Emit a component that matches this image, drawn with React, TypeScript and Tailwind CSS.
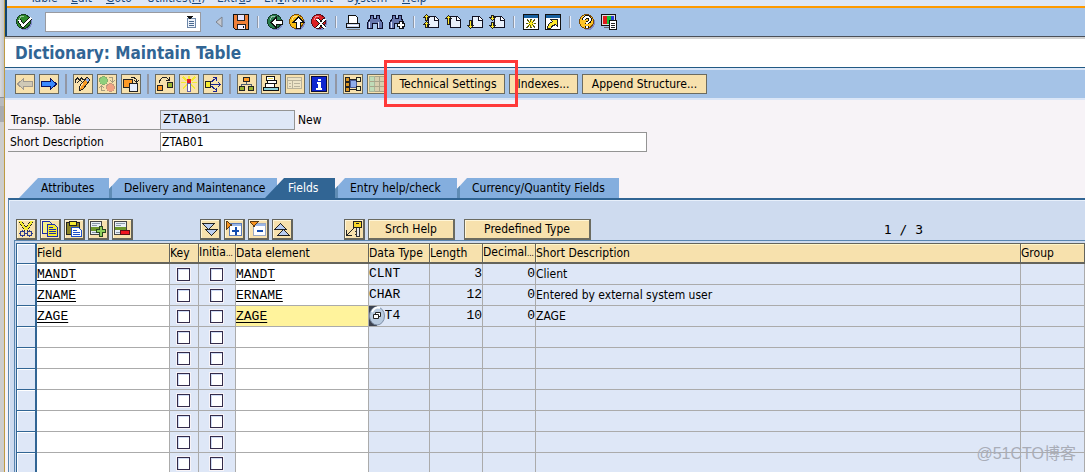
import { useState } from 'react';
import type { ReactNode } from 'react';

type IconName =
  | 'ok' | 'save' | 'back' | 'exit' | 'cancel' | 'print' | 'find' | 'findNext'
  | 'pageFirst' | 'pageUp' | 'pageDown' | 'pageLast' | 'session' | 'shortcut' | 'help' | 'layout'
  | 'left' | 'right' | 'display' | 'active' | 'other' | 'check' | 'activate' | 'whereUsed'
  | 'hierarchy' | 'stack' | 'list' | 'info' | 'graph' | 'grid'
  | 'cut' | 'copy' | 'paste' | 'insert' | 'delete' | 'expand' | 'insertNode' | 'collapseNode' | 'collapse' | 'key';

const page = (
  <>
    <path d="M5.500 2.500h7l3 3v8h-10z" fill="#e9f0fb" stroke="#111122" />
    <path d="M11.500 2.500v4h4" fill="#fff" stroke="#111122" />
  </>
);
const ball = (color: string, dark: string) => (
  <>
    <circle cx="9" cy="9" r="7" fill="#7f87c8" />
    <circle cx="7.5" cy="7.5" r="7" fill={color} stroke={dark} />
    <path d="M3 6a5 5 0 0 1 5-4" fill="none" stroke="#fff" opacity=".5" />
  </>
);

// All glyphs are drawn on a 16 x 16 grid
const icons: Record<IconName, ReactNode> = {
  ok: <>{ball('#2f8a2c', '#173f24')}<path d="M3 6l4 6 8-8" fill="none" stroke="#111" strokeWidth="4" /><path d="M3 6l4 6 8-8" fill="none" stroke="#fff" strokeWidth="2" /></>,
  save: <><path d="M.5.5h15v15h-13l-2-2z" fill="#f08038" stroke="#111" /><path d="M4.500.5h7v6h-7z" fill="#e6e4fb" stroke="#222" /><path d="M4.500 10.500h8v5h-8z" fill="#f3f0ff" stroke="#222" /><path d="M10 12h1v2h-1z" fill="#111" /></>,
  back: <>{ball('#2a7f4e', '#123a28')}<path d="M4 8.500l5-5v3h6.500v4H9v3z" fill="#fff" stroke="#111" /></>,
  exit: <>{ball('#f9bd14', '#7a4a08')}<path d="M9.500 3l5 5h-3v6.500h-4V8h-3z" fill="#fff" stroke="#111" /></>,
  cancel: <>{ball('#dc1f24', '#58101a')}<path d="M6 5l8 9M14 5l-8 9" stroke="#111" strokeWidth="3.500" /><path d="M6 5l8 9M14 5l-8 9" stroke="#fff" strokeWidth="1.800" /></>,
  print: <><path d="M3.500 1.500h7l2 2v6h-9z" fill="#fff" stroke="#111" /><path d="M1.500 9.500h13v4h-13z" fill="#c9d6ef" stroke="#111" /><path d="M3 11.500h10" stroke="#fff" /><path d="M2 15h13" stroke="#777" /></>,
  find: <><path d="M3.500 1.500h3v3h3v-3h3v3l3 4v6h-5v-5h-5v5h-5v-6l3-4z" fill="#6777ad" stroke="#0c0c28" /><path d="M2.500 8v6M11.500 8v6" stroke="#dce4fa" /></>,
  findNext: <><path d="M3.500 1.500h3v3h3v-3h3v3l2 4v6h-4v-5h-5v5h-5v-6l3-4z" fill="#6777ad" stroke="#0c0c28" /><path d="M2.500 8v6" stroke="#dce4fa" /><path d="M12 7v8M8 11h8" stroke="#111" strokeWidth="4" /><path d="M12 8v6M9 11h6" stroke="#fff" strokeWidth="2" /></>,
  pageFirst: <>{page}<path d="M3.500.5l3 3h-2v3h-2v-3h-2zM3.500 7.500l3 3h-2v3h-2v-3h-2z" fill="#ffe928" stroke="#222" /></>,
  pageUp: <>{page}<path d="M3.500 1.500l3 3h-2v6h-2v-6h-2z" fill="#ffe928" stroke="#222" /></>,
  pageDown: <>{page}<path d="M2.500 6.500h2v5h2l-3 3-3-3h2z" fill="#ffe928" stroke="#222" /></>,
  pageLast: <>{page}<path d="M2.500 1.500h2v2h2l-3 3-3-3h2zM2.500 8.500h2v3h2l-3 3-3-3h2z" fill="#ffe928" stroke="#222" /></>,
  session: <><path d="M.5.5h15v15H.5z" fill="#fff" stroke="#111" /><path d="M1 1h14v3H1z" fill="#17609f" /><path d="M8 5v9M3 9.500h10M4 5l8 9M12 5l-8 9" stroke="#5a5a10" strokeWidth="1.400" /><path d="M8 6v7M5 9.500h6M6 7l4 5M10 7l-4 5" stroke="#ffee20" /></>,
  shortcut: <><path d="M.5.5h15v15H.5z" fill="#fff" stroke="#111" /><path d="M1 1h14v3H1z" fill="#17609f" /><path d="M5.500 5.500h7v7l-2-2c-3 1-4 2-5 4h-3c0-4 2-5 5-7z" fill="#ffe928" stroke="#222" /></>,
  help: <>{ball('#ffc426', '#7a4a08')}<path d="M5 6c0-4 6-4 6 0 0 2-3 2-3 4M8 12v2" fill="none" stroke="#111" strokeWidth="3.600" /><path d="M5 6c0-4 6-4 6 0 0 2-3 2-3 4M8 12v2" fill="none" stroke="#fff" strokeWidth="2" /></>,
  layout: <><path d="M.5.5h14v11H.5z" fill="#ddd" stroke="#111" /><path d="M3 13.500h6" stroke="#666" /><path d="M2 2h4v8H2z" fill="#e01b1b" /><path d="M6 2h4v8H6z" fill="#18c331" /><path d="M10 2h3v8h-3z" fill="#263bd8" /><path d="M8.500 6.500h7v9h-7z" fill="#fff" stroke="#111" /><path d="M10 9.500h4M10 11.500h4M10 13.500h4" stroke="#222" /></>,
  left: <path d="M.5 8l6-5.500v3h9v5h-9v3z" fill="#cfc9b6" stroke="#a09a90" />,
  right: <path d="M15.500 8l-6-5.500v3h-9v5h9v3z" fill="#3a8aff" stroke="#0a1160" />,
  display: <><path d="M.5 7V4l2-2 2 2 2-2 2 2M2 7l3-3 3 3" fill="none" stroke="#222" /><path d="M12 1l3 3-7 9-4 2v-4z" fill="#f79a25" stroke="#222" /><path d="M12 2l2 2-2 2-2-2z" fill="#8fb0f0" /><path d="M8 7l-3 5" stroke="#ffe0a8" /></>,
  active: <><circle cx="4.500" cy="4.500" r="4" fill="#8fd07c" stroke="#86ae70" /><circle cx="11.500" cy="11.500" r="4" fill="#f1a283" stroke="#c49a80" /><path d="M10 1.500h3.500V6M11 4l2.500 2.500L16 4M6 14.500H2.500V10M0 12l2.500-2.500L5 12" fill="none" stroke="#a69d80" /></>,
  other: <><path d="M.5 3.500h9v8h-9z" fill="#ff9a24" stroke="#222" /><path d="M6.500 7.500h8v8h-8z" fill="#e5edfb" stroke="#222" /><path d="M8 1.500h3l2.500 2V6M11 4l2.500 2.500L16 4" fill="none" stroke="#222" /></>,
  check: <><path d="M.5 9.500h5v5h-5z" fill="#ff9a24" stroke="#222" /><path d="M10.500 6.500h5v5h-5z" fill="#98b431" stroke="#222" /><path d="M2.500 7V5l3-3.500h4l3 3M9 4.500h3.500V1" fill="none" stroke="#222" /></>,
  activate: <><path d="M2 1l4 4M14 1l-4 4M0 6.500h5M11 6.500h5M2 12l4-3M14 12l-4-3M8 0v3" stroke="#f4ea31" strokeWidth="1.500" /><path d="M6.500 7.500h3v8h-3z" fill="#fff" stroke="#6563a8" /><path d="M6 3h4v4H6z" fill="#e31f25" /></>,
  whereUsed: <><path d="M6 8.500h9M5 7l6-5M5 9l6 5M13 6l2.500 2.500L13 11M8 1.500h3.500V5M8 15.500h3.500V12" fill="none" stroke="#1a2390" /><path d="M.5 5.500h5v6h-5z" fill="#f4ea31" stroke="#222" /></>,
  hierarchy: <><path d="M7.500 5v3M2.500 10V8.500h10V10" fill="none" stroke="#52606f" /><path d="M4.500 1.500h6v4h-6z" fill="#ff9a24" stroke="#222" /><path d="M.5 10.500h5v4h-5zM9.500 10.500h5v4h-5z" fill="#98b431" stroke="#222" /></>,
  stack: <><path d="M3.500.5h8v4h-8zM4.500 4.500h9v3h-9zM2.500 7.500h9v4h-9z" fill="#fff" stroke="#111" /><path d="M.5 11.500h15v3H.5z" fill="#8dd3dc" stroke="#111" /><path d="M5 2.500h5" stroke="#e8de55" /></>,
  list: <><path d="M.5 1.500h14v11H.5z" fill="#ede4c7" stroke="#b9b29a" /><path d="M1 4.500h14M5.500 4v9M2 7.500h2M7 7.500h6M2 10.500h2M7 10.500h6" stroke="#b9b29a" /></>,
  info: <><path d="M.5.5h15v15H.5z" fill="#1027cf" stroke="#0a0d38" /><path d="M7 3h3v2H7zM6 6h4v6h1v2H5v-2h2V8H6z" fill="#fff" /></>,
  graph: <><path d="M4 3.500h8M4 8.500h8M4 13.500h8" stroke="#222" /><path d="M5.500 4.500h6v7h-6z" fill="#8fadea" stroke="#4b5c96" /><path d="M.5 1.500h4v4h-4zM.5 6.500h4v4h-4zM.5 11.500h4v4h-4z" fill="#d89422" stroke="#222" /><path d="M11.500 1.500h4v4h-4zM11.500 10.500h4v4h-4z" fill="#eef0c0" stroke="#222" /></>,
  grid: <><path d="M.5.5h15v15H.5z" fill="#d7ceae" stroke="#a9a58a" /><path d="M.5.5h5v15h-5z" fill="#bfdcb8" stroke="#a9b79a" /><path d="M1 5.500h14M1 10.500h14M10.500 1v14" stroke="#a9a58a" /></>,
  cut: <><path d="M2 0l6 9M14 0L8 9" stroke="#222" strokeWidth="3.500" /><path d="M2 0l6 9M14 0L8 9" stroke="#f4ea31" strokeWidth="2" /><circle cx="4.500" cy="12.500" r="2.300" fill="none" stroke="#2d3c8e" strokeWidth="1.500" /><circle cx="11.500" cy="12.500" r="2.300" fill="none" stroke="#2d3c8e" strokeWidth="1.500" /></>,
  copy: <><path d="M.5.5h7l3 3v9H.5z" fill="#f7f18a" stroke="#1c2ca8" /><path d="M5.500 3.500h7l3 3v9h-10z" fill="#f4ea31" stroke="#1c2ca8" /><path d="M7 6.500h4M7 8.500h7M7 10.500h7M7 12.500h7" stroke="#1c2ca8" /></>,
  paste: <><path d="M.5 1.500h13v12H.5z" fill="#8b8425" stroke="#222" /><path d="M3.500.5h7v4h-7z" fill="#f4ea31" stroke="#222" /><path d="M5.500 6.500h7l3 3v6h-10z" fill="#fff" stroke="#1c50c8" /><path d="M7 9.500h4M7 11.500h7M7 13.500h7" stroke="#1c50c8" /></>,
  insert: <><path d="M.5.5h11v13H.5z" fill="#e8eef5" stroke="#444" /><path d="M2 2.500h8M2 4.500h5M2 11.500h5" stroke="#8998a8" /><path d="M1 6h10v4H1z" fill="#6d982d" /><path d="M11 5v11M6 10h10" stroke="#294720" strokeWidth="4" /><path d="M11 6v9M7 10h8" stroke="#8fd05b" strokeWidth="2" /></>,
  delete: <><path d="M.5.5h12v13H.5z" fill="#e8eef5" stroke="#444" /><path d="M2 2.500h9M2 4.500h5M2 11.500h5" stroke="#8998a8" /><path d="M1 6h11v3H1z" fill="#6d982d" /><path d="M6.500 9.500h9v4h-9z" fill="#f01420" stroke="#5b1016" /></>,
  expand: <><path d="M.5 2.500h12l-6 6z" fill="#b9cdf1" stroke="#222" /><path d="M3.500 8.500h12l-6 6z" fill="#b9cdf1" stroke="#222" /></>,
  insertNode: <><path d="M3.500 2.500h12v12h-12z" fill="#fff" stroke="#5b7bb8" /><path d="M4 4h11" stroke="#9ab7e8" strokeWidth="2" /><path d="M6 10h7M9.500 6v8" stroke="#124cae" strokeWidth="2" /><path d="M.5 0v8l5-4z" fill="#f7931e" stroke="#5d3a10" /></>,
  collapseNode: <><path d="M3.500 2.500h12v12h-12z" fill="#fff" stroke="#9aaac5" /><path d="M4 4h11" stroke="#9ab7e8" strokeWidth="2" /><path d="M7 10h6" stroke="#124cae" strokeWidth="2" /><path d="M0 .5h8l-4 5z" fill="#f7931e" stroke="#5d3a10" /></>,
  collapse: <><path d="M.5 8.500h12l-6-6z" fill="#b9cdf1" stroke="#222" /><path d="M3.500 14.500h12l-6-6z" fill="#b9cdf1" stroke="#222" /></>,
  key: <><path d="M8 7l-7 7M.5 9v5.500H6" fill="none" stroke="#222" /><path d="M10.500 6.500h3v9h-3zM9 10.500h2M9 13.500h2" fill="#e8e8e8" stroke="#333" /><path d="M7.500.5h8v6h-8z" fill="#f7d62a" stroke="#222" /><path d="M10 2.500h3" stroke="#222" /></>,
};

function Icon({ name }: { name: IconName }) {
  return (
    <svg viewBox="0 0 16 16" shapeRendering="crispEdges" className="w-4 h-4 shrink-0 block" aria-hidden="true">
      {icons[name]}
    </svg>
  );
}

function FlatButton({ name }: { name: IconName }) {
  return (
    <button type="button" aria-label={name} className="w-4 h-4 shrink-0">
      <Icon name={name} />
    </button>
  );
}

function ToolButton({ name }: { name: IconName }) {
  return (
    <button type="button" aria-label={name} className="w-5 h-5 shrink-0 flex items-center justify-center bg-[#f7e1ad] border border-[#6b6b60]">
      <Icon name={name} />
    </button>
  );
}

function GridButton({ name }: { name: IconName }) {
  return (
    <button type="button" aria-label={name} className="w-[21px] h-[21px] shrink-0 flex items-center pl-px bg-[#f7e1ad] border border-r-2 border-b-2 border-[#64645c] shadow-[inset_1px_1px_0_#fff6d8]">
      <Icon name={name} />
    </button>
  );
}

const ThinLine = () => <span className="w-px h-3 shrink-0 ml-[2px] mr-[3px] bg-[#8f98a8] shadow-[1px_0_0_#e8eefb]" />;
const ThickLine = () => <span className="w-[2px] h-5 shrink-0 mx-[2px] bg-[#9297a4]" />;

const menu = [
  { before: '', key: '', after: 'Table', width: 'w-[41px]' },
  { before: '', key: 'E', after: 'dit', width: 'w-[35px]' },
  { before: '', key: 'G', after: 'oto', width: 'w-[41px]' },
  { before: 'Utilities(', key: 'M', after: ')', width: 'w-[70px]' },
  { before: 'Extr', key: 'a', after: 's', width: 'w-[47px]' },
  { before: 'En', key: 'v', after: 'ironment', width: 'w-[83px]' },
  { before: 'S', key: 'y', after: 'stem', width: 'w-[55px]' },
  { before: '', key: 'H', after: 'elp', width: 'w-[40px]' },
];

const tabs = [
  { label: 'Attributes', style: 'w-[90px] pl-[22px] [clip-path:polygon(19px_0,100%_0,100%_100%,0_100%)]' },
  { label: 'Delivery and Maintenance', style: 'w-[168px] pl-3 border-l-[3px] [clip-path:polygon(10px_0,100%_0,100%_100%,0_100%,0_11px)]' },
  { label: 'Fields', style: 'w-[70px] pl-[23px] -ml-3 [clip-path:polygon(19px_0,100%_0,100%_100%,0_100%)]' },
  { label: 'Entry help/check', style: 'w-[122px] pl-3 border-l-[3px] [clip-path:polygon(10px_0,100%_0,100%_100%,0_100%,0_11px)]' },
  { label: 'Currency/Quantity Fields', style: 'w-[162px] pl-3 border-l-[3px] [clip-path:polygon(10px_0,100%_0,100%_100%,0_100%,0_11px)]' },
];

const columns = [
  { name: 'Field' },
  { name: 'Key' },
  { name: 'Initia', cut: true },
  { name: 'Data element' },
  { name: 'Data Type' },
  { name: 'Length' },
  { name: 'Decimal', cut: true },
  { name: 'Short Description' },
  { name: 'Group' },
];

interface Row {
  field: string;
  element: string;
  type: string;
  length: string;
  decimals: string;
  text: string;
}

const blank: Row = { field: '', element: '', type: '', length: '', decimals: '', text: '' };
const rows: Row[] = [
  { field: 'MANDT', element: 'MANDT', type: 'CLNT', length: '3', decimals: '0', text: 'Client' },
  { field: 'ZNAME', element: 'ERNAME', type: 'CHAR', length: '12', decimals: '0', text: 'Entered by external system user' },
  { field: 'ZAGE', element: 'ZAGE', type: 'INT4', length: '10', decimals: '0', text: 'ZAGE' },
  ...Array.from({ length: 7 }, () => blank),
];

const mono = "font-['Liberation_Mono',monospace] text-[13px]";
const cell = 'p-0 h-[21px] border-r border-b border-[#ababab] overflow-hidden whitespace-nowrap';
const box = 'appearance-none block w-[13px] h-[13px] bg-white border border-[#332b4a] shadow-[0_0_0_1px_#f7f3f7,inset_1px_1px_0_#cfdcf5] checked:bg-[#332b4a]';
const textButton = 'shrink-0 bg-[#f7e1ad] border-[#6b6b60] text-center';

export default function App() {
  const [activeTab, setActiveTab] = useState('Fields');

  return (
    <div className="h-screen flex overflow-hidden bg-[#f7f3f7] font-['DejaVu_Sans_Condensed','DejaVu_Sans',sans-serif] text-[12px] leading-4 text-black">
      {/* Edge of the window behind */}
      <div className="w-[5px] shrink-0 flex flex-col bg-[#cdcdcd] border-r border-[#bd9a42]">
        <div className="h-[98px] bg-linear-to-r from-[#d8dadd] to-[#c2c4c8] border-b border-[#8b8f96]" />
        <div className="h-2 bg-[#b8babd]" />
        <div className="h-4 bg-[#a9abae]" />
      </div>

      <div className="flex-1 min-w-0 flex flex-col relative">
        <header className="shrink-0 border-l-2 border-[#10426b]">
          <nav className="h-[6px] flex items-end overflow-hidden bg-[#dee7f7] pl-[23px] text-[#17477b]">
            {menu.map((item) => (
              <a key={item.before + item.key + item.after} href="#" className={`${item.width} shrink-0 whitespace-nowrap`}>
                {item.before}<span className="underline">{item.key}</span>{item.after}
              </a>
            ))}
          </nav>
          <div className="h-[30px] flex items-center gap-[6px] bg-[#a5c3e7] border-t-2 border-[#ff9a00] pl-[9px]">
            <FlatButton name="ok" />
            <div className="w-[156px] h-5 shrink-0 ml-[7px] flex items-center bg-white border border-[#999aa0] pr-1">
              <input aria-label="Command" className="min-w-0 flex-1 h-full outline-none px-1" />
              <svg viewBox="0 0 10 12" shapeRendering="crispEdges" className="w-[10px] h-3" aria-hidden="true">
                <path d="M1.500 2.500h8v9h-8z" fill="#eef3fb" stroke="#6d87a8" />
                <path d="M3 5.500h5M3 7.500h5M3 9.500h5" stroke="#4a6a90" />
                <path d="M0 0h7L4 4z" fill="#111" />
              </svg>
            </div>
            <button type="button" aria-label="Hide command field" className="w-2 ml-2 mr-1">
              <svg viewBox="0 0 8 12" className="w-2 h-3 block"><path d="M7 1v10L1 6z" fill="#c4c8d0" stroke="#7b828e" /></svg>
            </button>
            <FlatButton name="save" />
            <ThinLine />
            <FlatButton name="back" />
            <FlatButton name="exit" />
            <FlatButton name="cancel" />
            <ThinLine />
            <FlatButton name="print" />
            <FlatButton name="find" />
            <FlatButton name="findNext" />
            <ThinLine />
            <FlatButton name="pageFirst" />
            <FlatButton name="pageUp" />
            <FlatButton name="pageDown" />
            <FlatButton name="pageLast" />
            <ThinLine />
            <FlatButton name="session" />
            <FlatButton name="shortcut" />
            <ThinLine />
            <FlatButton name="help" />
            <FlatButton name="layout" />
          </div>
        </header>

        <div className="h-8 shrink-0 flex items-center bg-white border-t border-[#4a4f58] border-b border-b-[#215984] shadow-[inset_0_2px_0_#d2d2d2] pt-[2px] pl-[10px]">
          <h1 className="text-[17px] font-bold text-[#316594]">Dictionary: Maintain Table</h1>
        </div>

        {/* Application toolbar */}
        <div className="h-8 shrink-0 flex items-center gap-1 bg-[#a5c3e7] border-y-2 border-[#dbe6f7] pl-[10px]">
          <ToolButton name="left" />
          <ToolButton name="right" />
          <ThickLine />
          <ToolButton name="display" />
          <ToolButton name="active" />
          <ToolButton name="other" />
          <ThickLine />
          <ToolButton name="check" />
          <ToolButton name="activate" />
          <ToolButton name="whereUsed" />
          <ThickLine />
          <ToolButton name="hierarchy" />
          <ToolButton name="stack" />
          <ToolButton name="list" />
          <ToolButton name="info" />
          <ThickLine />
          <ToolButton name="graph" />
          <ToolButton name="grid" />
          <div className="relative z-10 shrink-0">
            <button type="button" className={`${textButton} block w-[114px] h-5 border`}>Technical Settings</button>
            <span className="absolute -left-[7px] -right-[13px] -top-[14px] -bottom-[13px] border-[3px] border-[#ff3939] pointer-events-none" />
          </div>
          <button type="button" className={`${textButton} w-[69px] h-5 border`}>Indexes...</button>
          <button type="button" className={`${textButton} w-[125px] h-5 border`}>Append Structure...</button>
        </div>

        <form className="shrink-0 flex flex-col gap-[2px] pt-[10px] pl-[3px]">
          <div className="flex h-5">
            <label htmlFor="table-name" className="w-[152px] pl-[3px] pt-[2px] border-b border-[#949494]">Transp. Table</label>
            <input id="table-name" readOnly defaultValue="ZTAB01" className={`${mono} w-[135px] px-[2px] bg-[#dee7f7] border border-[#949494] outline-none`} />
            <span className="pl-[3px] pt-[2px]">New</span>
          </div>
          <div className="flex h-5">
            <label htmlFor="description" className="w-[152px] pl-[2px] pt-[2px] border-b border-[#949494]">Short Description</label>
            <input id="description" defaultValue="ZTAB01" className="w-[487px] px-px bg-white border border-[#949494] outline-none" />
          </div>
        </form>

        <div role="tablist" className="shrink-0 flex mt-[26px] pl-[14px]">
          {tabs.map((tab) => (
            <button
              key={tab.label}
              type="button"
              role="tab"
              aria-selected={tab.label === activeTab}
              onClick={() => setActiveTab(tab.label)}
              className={`${tab.style} h-5 shrink-0 text-left whitespace-nowrap border-[#5f8cb5] ${tab.label === activeTab ? 'bg-[#316594] text-white' : 'bg-[#84aede]'}`}
            >
              {tab.label}
            </button>
          ))}
        </div>

        <section className="flex-1 ml-[3px] bg-[#cedbef] border-t-2 border-l border-t-[#316594] border-l-[#5a86b0] shadow-[inset_1px_1px_0_#e8f0fb]">
          <div className="flex items-center gap-[3px] pt-[19px] pl-[7px]">
            <GridButton name="cut" />
            <GridButton name="copy" />
            <GridButton name="paste" />
            <GridButton name="insert" />
            <GridButton name="delete" />
            <span className="w-[61px] shrink-0" />
            <GridButton name="expand" />
            <GridButton name="insertNode" />
            <GridButton name="collapseNode" />
            <GridButton name="collapse" />
            <span className="w-[45px] shrink-0" />
            <GridButton name="key" />
            <button type="button" className={`${textButton} w-[87px] h-[21px] border border-r-2 border-b-2 shadow-[inset_1px_1px_0_#fff6d8]`}>Srch Help</button>
            <button type="button" className={`${textButton} w-[127px] h-[21px] ml-[6px] border border-r-2 border-b-2 shadow-[inset_1px_1px_0_#fff6d8]`}>Predefined Type</button>
            <span className="ml-auto mr-[162px] font-['DejaVu_Sans_Mono',monospace] text-[13px] whitespace-nowrap">1 / 3</span>
          </div>

          <div className="ml-[5px] pt-[2px] pl-px border-t border-l border-[#5a86b0]">
            <table className="w-full table-fixed border-separate border-spacing-0">
              <colgroup>
                <col className="w-[21px]" />
                <col className="w-[133px]" />
                <col className="w-[29px]" />
                <col className="w-[37px]" />
                <col className="w-[133px]" />
                <col className="w-[61px]" />
                <col className="w-[53px]" />
                <col className="w-[53px]" />
                <col className="w-[485px]" />
                <col />
              </colgroup>
              <thead>
                <tr>
                  <td className="p-0 h-[21px] bg-[#dee7f7] border border-r-2 border-[#316594] shadow-[inset_1px_1px_0_#fff]" />
                  {columns.map(({ name, cut }) => (
                    <th key={name} scope="col" className="p-0 h-[21px] bg-[#f7e1ad] text-left font-normal whitespace-nowrap overflow-hidden border-t border-r border-b-2 border-[#64645c] shadow-[inset_1px_1px_0_#fff6c8]">
                      {name}{cut && <span className="text-[8px]">...</span>}
                    </th>
                  ))}
                </tr>
              </thead>
              <tbody className="bg-[#dee7f7]">
                {rows.map((row, i) => (
                  <tr key={i}>
                    <td className="p-0 h-[21px] border-l border-r-2 border-b border-[#316594] shadow-[inset_1px_1px_0_#fff]" />
                    <td className={`${cell} bg-white`}>
                      <input aria-label={`Field ${i + 1}`} defaultValue={row.field} className={`${mono} block w-full h-5 underline underline-offset-2 outline-none`} />
                    </td>
                    <td className={`${cell} pl-[7px]`}><input type="checkbox" aria-label={`Key ${i + 1}`} className={box} /></td>
                    <td className={`${cell} pl-[11px]`}><input type="checkbox" aria-label={`Initial ${i + 1}`} className={box} /></td>
                    <td className={`${cell} ${i === 2 ? 'bg-[#fff39c]' : 'bg-white'}`}>
                      <input aria-label={`Data element ${i + 1}`} defaultValue={row.element} className={`${mono} block w-full h-5 underline underline-offset-2 outline-none`} />
                    </td>
                    <td className={`${cell} ${mono} relative`}>
                      {row.type}
                      {i === 2 && (
                        <button type="button" aria-label="Search data element" className="absolute left-0 top-0 w-4 h-5">
                          <svg viewBox="0 0 16 20" className="w-4 h-5 block">
                            <path d="M0 0h8v20H0z" fill="#3d4350" />
                            <path d="M8 0h8v20H8z" fill="#dee7f7" />
                            <ellipse cx="8" cy="10" rx="7.500" ry="9" fill="#b9cbe0" stroke="#7d8ea6" />
                            <path d="M3 6c2-4 5-5 8-4" fill="none" stroke="#fff" strokeWidth="2" />
                            <path d="M6.500 6.500h5v4h-5z" fill="#fff" stroke="#222" />
                            <path d="M4.500 8.500h5v4h-5z" fill="#fff" stroke="#222" />
                          </svg>
                        </button>
                      )}
                    </td>
                    <td className={`${cell} ${mono} text-right`}>{row.length}</td>
                    <td className={`${cell} ${mono} text-right`}>{row.decimals}</td>
                    <td className={cell}>{row.text}</td>
                    <td className={cell} />
                  </tr>
                ))}
              </tbody>
            </table>
          </div>
        </section>

        <span className="absolute right-[9px] bottom-2 font-['Liberation_Sans','Noto_Sans_CJK_SC',sans-serif] text-[16px] leading-5 text-[#a9adb8] whitespace-nowrap">@51CTO博客</span>
      </div>
    </div>
  );
}
